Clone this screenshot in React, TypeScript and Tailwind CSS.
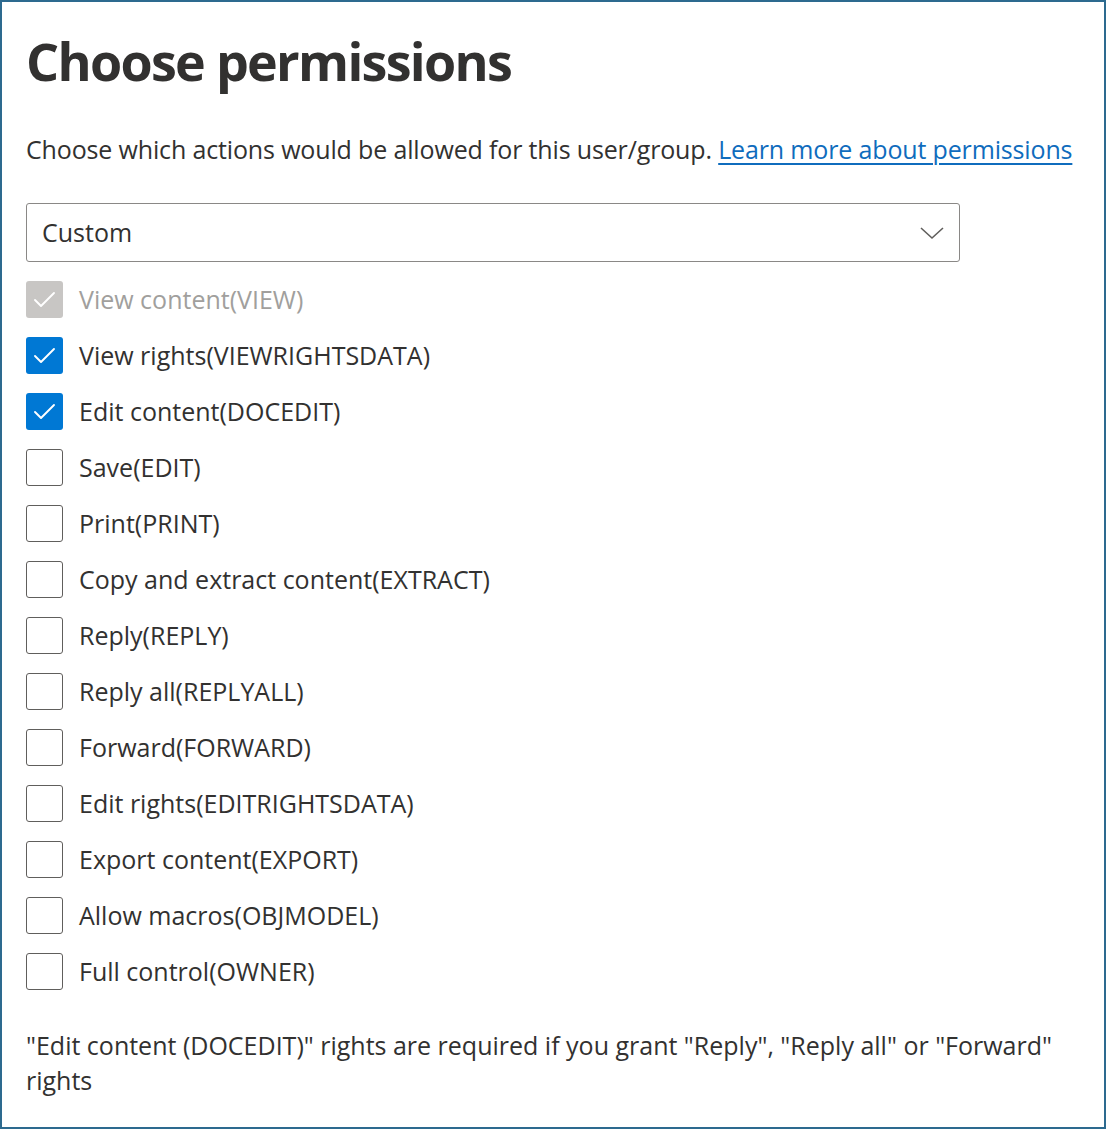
import React from "react";

const items: { label: string; state: "disabled" | "checked" | "unchecked" }[] = [
  { label: "View content(VIEW)", state: "disabled" },
  { label: "View rights(VIEWRIGHTSDATA)", state: "checked" },
  { label: "Edit content(DOCEDIT)", state: "checked" },
  { label: "Save(EDIT)", state: "unchecked" },
  { label: "Print(PRINT)", state: "unchecked" },
  { label: "Copy and extract content(EXTRACT)", state: "unchecked" },
  { label: "Reply(REPLY)", state: "unchecked" },
  { label: "Reply all(REPLYALL)", state: "unchecked" },
  { label: "Forward(FORWARD)", state: "unchecked" },
  { label: "Edit rights(EDITRIGHTSDATA)", state: "unchecked" },
  { label: "Export content(EXPORT)", state: "unchecked" },
  { label: "Allow macros(OBJMODEL)", state: "unchecked" },
  { label: "Full control(OWNER)", state: "unchecked" },
];

function Check() {
  return (
    <svg width="37" height="37" viewBox="0 0 37 37" fill="none">
      <path d="M9 19 L15 25 L28 12" stroke="white" strokeWidth="1.9" strokeLinecap="round" strokeLinejoin="round" />
    </svg>
  );
}

function Box({ state }: { state: string }) {
  if (state === "disabled")
    return (
      <div className="w-[37px] h-[37px] rounded-[3px] bg-[#c8c6c4] flex items-center justify-center shrink-0">
        <Check />
      </div>
    );
  if (state === "checked")
    return (
      <div className="w-[37px] h-[37px] rounded-[3px] bg-[#0078d4] flex items-center justify-center shrink-0">
        <Check />
      </div>
    );
  return <div className="w-[37px] h-[37px] rounded-[3px] border-[1.5px] border-[#605e5c] bg-white shrink-0" />;
}

export default function App() {
  return (
    <div
      className="w-[1106px] h-[1129px] border-2 border-[#2d6a8f] bg-white text-[#323130] overflow-hidden"
      style={{ fontFamily: '"Open Sans", "Noto Sans", sans-serif' }}
    >
      <div className="pl-[24px] pt-[28px]">
        <h1 className="text-[52px] font-bold leading-[62px] tracking-[-1.7px] text-[#323130]">Choose permissions</h1>
        <p className="mt-[40px] text-[25px] leading-[34px] tracking-[-0.15px]">
          Choose which actions would be allowed for this user/group.{" "}
          <a className="text-[#0f6cbd] underline underline-offset-[4px] decoration-[1.5px]" href="#">
            Learn more about permissions
          </a>
        </p>
        <div className="mt-[37px] w-[934px] h-[59px] border-[1.5px] border-[#8a8886] rounded-[3px] flex items-center justify-between pl-[15px] pr-[14px]">
          <span className="text-[25px]">Custom</span>
          <svg width="26" height="16" viewBox="0 0 26 16" fill="none">
            <path d="M2 3 L13 13 L24 3" stroke="#605e5c" strokeWidth="1.6" />
          </svg>
        </div>
        <div className="mt-[19px] flex flex-col gap-[19px]">
          {items.map((it) => (
            <div key={it.label} className="flex items-center gap-[16px] h-[37px]">
              <Box state={it.state} />
              <span
                className={
                  "text-[25px] leading-[37px] " +
                  (it.state === "disabled" ? "text-[#a19f9d]" : "text-[#323130]")
                }
              >
                {it.label}
              </span>
            </div>
          ))}
        </div>
        <p className="mt-[38px] text-[25px] leading-[35px] w-[1060px]">
          "Edit content (DOCEDIT)" rights are required if you grant "Reply", "Reply all" or "Forward" rights
        </p>
      </div>
    </div>
  );
}
